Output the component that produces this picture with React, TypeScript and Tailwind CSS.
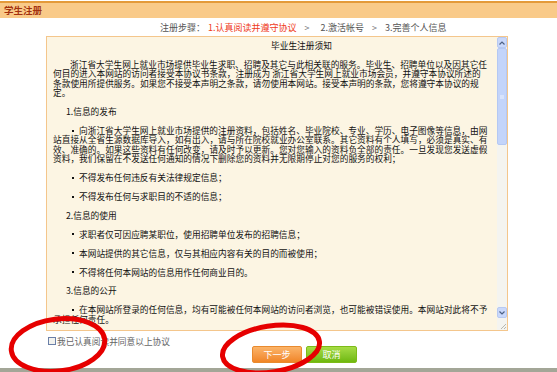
import React from "react";

type Line = { t: string; pl: number; bullet?: boolean } | null;

const lines: Line[] = [
  { t: "毕业生注册须知", pl: 218 },
  null,
  { t: "浙江省大学生网上就业市场提供毕业生求职、招聘及其它与此相关联的服务。毕业生、招聘单位以及因其它任", pl: 17 },
  { t: "何目的进入本网站的访问者接受本协议书条款，注册成为 浙江省大学生网上就业市场会员，并遵守本协议所述的", pl: 0 },
  { t: "条款使用所提供服务。如果您不接受本声明之条款，请勿使用本网站。接受本声明的条款，您将遵守本协议的规", pl: 0 },
  { t: "定。", pl: 0 },
  null,
  { t: "1.信息的发布", pl: 13 },
  null,
  { t: "向浙江省大学生网上就业市场提供的注册资料，包括姓名、毕业院校、专业、学历、电子图像等信息，由网", pl: 19, bullet: true },
  { t: "站直接从全省生源数据库导入，如有出入，请与所在院校就业办公室联系。其它资料有个人填写，必须是真实、有", pl: 0 },
  { t: "效、准确的。如果这些资料有任何改变，请及时予以更新。您对您输入的资料负全部的责任。一旦发现您发送虚假", pl: 0 },
  { t: "资料，我们保留在不发送任何通知的情况下删除您的资料并无限期停止对您的服务的权利；", pl: 0 },
  null,
  { t: "不得发布任何违反有关法律规定信息；", pl: 19, bullet: true },
  null,
  { t: "不得发布任何与求职目的不适的信息；", pl: 19, bullet: true },
  null,
  { t: "2.信息的使用", pl: 13 },
  null,
  { t: "求职者仅可因应聘某职位，使用招聘单位发布的招聘信息；", pl: 19, bullet: true },
  null,
  { t: "本网站提供的其它信息，仅与其相应内容有关的目的而被使用；", pl: 19, bullet: true },
  null,
  { t: "不得将任何本网站的信息用作任何商业目的。", pl: 19, bullet: true },
  null,
  { t: "3.信息的公开", pl: 13 },
  null,
  { t: "在本网站所登录的任何信息，均有可能被任何本网站的访问者浏览，也可能被错误使用。本网站对此将不予", pl: 19, bullet: true },
  { t: "承担任何责任。", pl: -6 },
];

const font = {
  fontFamily: '"Noto Sans CJK SC", "Liberation Sans", sans-serif',
};

export default function App() {
  return (
    <div
      className="relative w-[557px] h-[372px] overflow-hidden bg-white flex flex-col"
      style={font}
    >
      {/* header */}
      <div className="h-[18px] shrink-0 border-t border-white">
        <div className="h-full border-t-2 border-[#e49a3a] bg-[#f9ca89] flex items-center pl-[4px]">
          <span className="text-[9.5px] leading-none font-bold text-[#a3310e]">学生注册</span>
        </div>
      </div>

      {/* steps */}
      <div className="h-[18px] shrink-0 flex items-center pl-[160px] text-[9px] leading-none text-[#555] whitespace-nowrap">
        <span>注册步骤：</span>
        <span className="ml-[3px] text-[#ef3a1a]">1.认真阅读并遵守协议</span>
        <span className="ml-[8px] text-[#777]">&gt;</span>
        <span className="ml-[11px]">2.激活帐号</span>
        <span className="ml-[8px] text-[#777]">&gt;</span>
        <span className="ml-[8px]">3.完善个人信息</span>
      </div>

      {/* textarea */}
      <div className="ml-[46px] w-[462px] h-[295px] shrink-0 border border-[#f4c68c] bg-[#fcf5e3] flex">
        <div className="flex-1 overflow-hidden pl-[6px] pt-[4px] text-[8.7px] leading-[9.45px] text-[#111] whitespace-nowrap">
          {lines.map((l, i) =>
            l === null ? (
              <div key={i} className="h-[9.45px]" />
            ) : (
              <div key={i} className="h-[9.45px] flex" style={{ paddingLeft: l.pl }}>
                {l.bullet && (
                  <span className="inline-flex w-[7px] items-center">
                    <span className="inline-block w-[2px] h-[2px] bg-[#111]" />
                  </span>
                )}
                <span>{l.t}</span>
              </div>
            )
          )}
        </div>
        {/* scrollbar */}
        <div className="w-[10px] shrink-0 flex flex-col bg-[#f4f4f0]">
          <div className="h-[11px] shrink-0 rounded-[2px] border border-[#b7c9f2] bg-[#c9d8fb] flex items-center justify-center">
            <svg width="6" height="4" viewBox="0 0 6 4">
              <path d="M0.5 3.5 L3 1 L5.5 3.5" stroke="#4d6185" strokeWidth="1.2" fill="none" />
            </svg>
          </div>
          <div className="h-[97px] shrink-0 rounded-[2px] border border-[#b4c8f3] bg-[#c3d4fa] flex items-center justify-center">
            <div className="w-[4px] h-[4px] bg-[#d8e3fc]" />
          </div>
          <div className="flex-1" />
          <div className="h-[11px] shrink-0 rounded-[2px] border border-[#b7c9f2] bg-[#c9d8fb] flex items-center justify-center">
            <svg width="6" height="4" viewBox="0 0 6 4">
              <path d="M0.5 0.5 L3 3 L5.5 0.5" stroke="#4d6185" strokeWidth="1.2" fill="none" />
            </svg>
          </div>
          <div className="h-[12px] shrink-0 bg-[#f4f4f0] flex items-end justify-end">
            <svg width="8" height="8" viewBox="0 0 8 8">
              <path d="M7 2 L2 7 M7 5 L5 7" stroke="#b8b8b0" strokeWidth="1" />
            </svg>
          </div>
        </div>
      </div>

      {/* checkbox */}
      <div className="h-[15px] shrink-0 flex items-start pt-[6px] pl-[48px] text-[8.7px] leading-[9px] text-[#666] whitespace-nowrap">
        <span className="w-[8px] h-[8px] border border-[#6a7fa8] bg-[#f2f2ee] mr-[1px]" />
        <span>我已认真阅读并同意以上协议</span>
      </div>

      {/* buttons */}
      <div className="h-[22px] shrink-0 flex items-start pl-[252px] gap-[4px]">
        <button className="w-[50px] h-[17px] rounded-[2px] border border-[#e98a2e] bg-gradient-to-b from-[#fbb468] to-[#f08524] text-white text-[9px] leading-none">
          下一步
        </button>
        <button className="w-[51px] h-[17px] rounded-[2px] border border-[#7dbb18] bg-gradient-to-b from-[#a6dc44] to-[#6fb80c] text-white text-[9px] leading-none">
          取消
        </button>
      </div>

      {/* bottom strip */}
      <div className="flex-1 bg-[#a3a697]" />

      {/* annotation ellipses */}
      <svg
        className="absolute inset-0 pointer-events-none"
        width="557"
        height="372"
        viewBox="0 0 557 372"
      >
        <ellipse cx="58" cy="345" rx="47" ry="26" transform="rotate(-7 58 345)" fill="none" stroke="#e60000" strokeWidth="5" />
        <ellipse cx="271" cy="349" rx="49" ry="23" transform="rotate(-9 271 349)" fill="none" stroke="#e60000" strokeWidth="5" />
      </svg>
    </div>
  );
}
